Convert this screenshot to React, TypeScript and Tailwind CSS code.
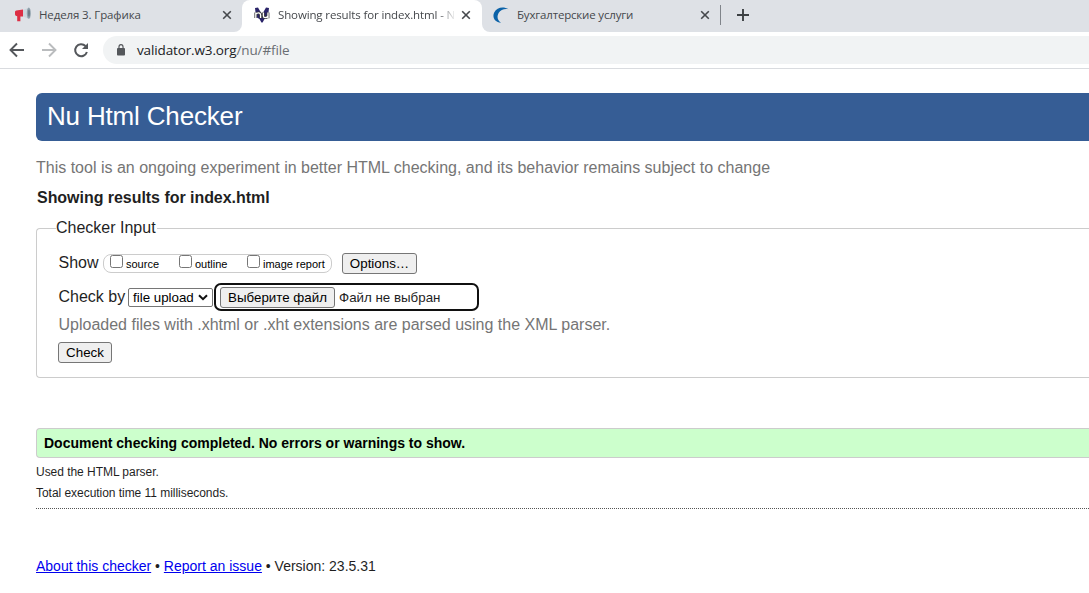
import React from "react";

function Close() {
  return (
    <svg width="10" height="10" viewBox="0 0 10 10" className="shrink-0">
      <path d="M1.2 1.2l7.6 7.6M8.8 1.2L1.2 8.8" stroke="#45484c" strokeWidth="1.6" />
    </svg>
  );
}

function Megaphone() {
  return (
    <svg width="18" height="16" viewBox="0 0 18 16" className="shrink-0">
      <path d="M1 5Q1 3.6 2.3 3.5L9 2.6V9.6L6.4 9.4V14.2H3.2V9.3Q1.2 9.2 1 7.6Z" fill="#dd2e44" />
      <path d="M9 3L14 1V11.5L9 9.5Z" fill="#ccd6dd" />
      <ellipse cx="14.8" cy="6.2" rx="2" ry="5.6" fill="#8fa1ac" />
      <ellipse cx="15" cy="6.2" rx="0.8" ry="3.6" fill="#66757f" />
    </svg>
  );
}

function NuLogo() {
  return (
    <svg width="16" height="16" viewBox="0 0 16 16" className="shrink-0">
      <path d="M1 1L4 0.5L8 7.5L12 0.5L15 1L14 10L10.5 12L8.6 15.6H7.4L5.5 12L2 10Z" fill="#2a2469" />
      <path d="M1.8 11V5.6M1.8 7.2Q3 5.8 4.8 5.9Q6.6 6.1 6.6 8V11M9.4 5.4V9Q9.4 10.6 11.2 10.6Q14 10.5 14 8.5M14 5.4V11.2" fill="none" stroke="#3a3a3a" strokeWidth="2.8" />
      <path d="M1.8 11V5.6M1.8 7.2Q3 5.8 4.8 5.9Q6.6 6.1 6.6 8V11M9.4 5.4V9Q9.4 10.6 11.2 10.6Q14 10.5 14 8.5M14 5.4V11.2" fill="none" stroke="#fff" strokeWidth="1.3" />
    </svg>
  );
}

function Crescent() {
  return (
    <svg width="16" height="16" viewBox="0 0 16 16" className="shrink-0">
      <path d="M15.6 2.2C10 -0.8 4 0.4 1.2 5.5C-1 10 1.6 15.4 8 15.8C4.4 13.5 3.6 9.5 5.6 6C7.6 2.6 11.5 1.4 15.6 2.2Z" fill="#0b62a8" />
    </svg>
  );
}

const buttonBase = "box-border shrink-0 rounded-[3px] border border-[#767676] bg-[#efefef] text-[13.333px] leading-[19px] text-black";

function Check({ label, box }: { label: string; box: string }) {
  return (
    <label className={"flex shrink-0 items-start " + box}>
      <span className="mr-[3px] h-[13px] w-[13px] shrink-0 rounded-[2.5px] border border-[#767676] bg-white" />
      <span className="mt-[2px] whitespace-nowrap text-[11px] leading-[14px] text-black">{label}</span>
    </label>
  );
}

export default function App() {
  return (
    <div className="h-[593px] w-[1089px] overflow-hidden bg-white font-['Liberation_Sans',Arial,sans-serif] text-[#1f1f1f]">
      <header className="font-['Open_Sans','Noto_Sans',sans-serif]">
        <div className="flex h-8 bg-white text-[11.5px] text-[#45484c]">
          <div className="flex h-8 w-[242px] items-center rounded-br-[8px] bg-[#dee1e6] pr-[10px] pb-[2px] pl-[14px]">
            <Megaphone />
            <span className="ml-[7px] flex-1 whitespace-nowrap tracking-[-0.12px]">Неделя 3. Графика</span>
            <Close />
          </div>
          <div className="flex h-8 w-[240px] bg-[#dee1e6]">
            <div className="flex h-8 w-full items-center rounded-t-[8px] bg-white pr-[11px] pb-[2px] pl-[12px]">
              <NuLogo />
              <span className="ml-2 w-[176px] overflow-hidden whitespace-nowrap tracking-[-0.13px] [mask-image:linear-gradient(to_right,#000_160px,transparent_178px)]">Showing results for index.html - N</span>
              <span className="flex-1" />
              <Close />
            </div>
          </div>
          <div className="flex h-8 flex-1 items-center rounded-bl-[8px] bg-[#dee1e6] pb-[2px] pl-[11px]">
            <Crescent />
            <span className="ml-2 w-[183px] whitespace-nowrap tracking-[-0.18px]">Бухгалтерские услуги</span>
            <Close />
            <span className="ml-[10px] h-5 w-px bg-[#80848a]" />
            <svg width="12" height="12" viewBox="0 0 12 12" className="ml-4">
              <path d="M6 0v12M0 6h12" stroke="#3c4043" strokeWidth="1.9" />
            </svg>
          </div>
        </div>
        <div className="flex h-[37px] items-center border-b border-[#d9dbdf] bg-white pl-[9px]">
          <svg width="16" height="16" viewBox="0 0 16 16" fill="none" stroke="#54575b" strokeWidth="1.9">
            <path d="M15 8H2M8 1.5L1.5 8L8 14.5" />
          </svg>
          <svg width="16" height="16" viewBox="0 0 16 16" fill="none" stroke="#babcbe" strokeWidth="1.9" className="ml-4">
            <path d="M1 8H14M8 1.5L14.5 8L8 14.5" />
          </svg>
          <svg width="16" height="16" viewBox="0 0 16 16" className="ml-4">
            <path d="M13.9 10A6 6 0 1 1 12.5 4" fill="none" stroke="#54575b" strokeWidth="2" />
            <path d="M15 1V7H9Z" fill="#54575b" />
          </svg>
          <div className="ml-[14px] flex h-7 flex-1 items-center rounded-l-full bg-[#f1f3f4] pl-[14px] text-[13.5px]">
            <svg width="8" height="12" viewBox="0 0 9 12" preserveAspectRatio="none">
              <rect x="0" y="4" width="9" height="7.6" rx="1" fill="#54575b" />
              <path d="M2.2 5V3a2.3 2.3 0 0 1 4.6 0v2" fill="none" stroke="#54575b" strokeWidth="1.3" />
            </svg>
            <span className="ml-[12px] whitespace-nowrap tracking-[-0.13px] text-[#202124]">validator.w3.org<span className="text-[#6a6e73]">/nu/#file</span></span>
          </div>
        </div>
      </header>

      <main className="pt-6 pl-9">
        <h1 className="h-12 rounded-l-[6px] bg-[#365d95] pl-[11px] text-[26px] leading-[46px] tracking-[-0.17px] text-white">Nu Html Checker</h1>
        <p className="mt-[17px] h-5 text-[16px] leading-5 whitespace-nowrap text-[#757575]">This tool is an ongoing experiment in better HTML checking, and its behavior remains subject to change</p>
        <h2 className="mt-[10px] h-5 pl-px text-[16px] leading-5 font-bold tracking-[-0.04px]">Showing results for index.html</h2>

        <fieldset className="mt-[10px] h-[160px] rounded-l-[4px] border border-r-0 border-[#ccc] pl-[21px]">
          <legend className="-ml-[2px] h-5 pr-px text-[16px] leading-5">Checker Input</legend>
          <div className="mt-[14px] flex h-[22px] items-center">
            <span className="w-[45px] pl-[0.5px] text-[16px] leading-5">Show</span>
            <div className="flex h-[19px] w-[229px] items-start rounded-[8px] border border-[#ccc] pl-[6px]">
              <Check label="source" box="w-[69px]" />
              <Check label="outline" box="w-[68px]" />
              <Check label="image report" box="w-[80px]" />
            </div>
            <button className={buttonBase + " ml-[10px] h-[21px] w-[75px]"}>Options…</button>
          </div>
          <div className="mt-[9px] flex h-[28px] items-center">
            <span className="w-[70px] pl-[0.5px] whitespace-nowrap text-[16px] leading-5">Check by</span>
            <div className="flex h-[19px] w-[85px] items-center justify-between rounded-[2px] border border-[#767676] bg-white pr-1 pl-1 text-[13.333px] leading-[17px] text-black">
              file upload
              <svg width="10" height="7" viewBox="0 0 10 7">
                <path d="M1 1.2L5 5.2L9 1.2" fill="none" stroke="#111" strokeWidth="2" />
              </svg>
            </div>
            <div className="ml-px flex h-[28px] w-[265px] items-center rounded-[7px] border-2 border-[#101010] pl-[4px]">
              <button className={buttonBase + " h-[21px] w-[115px] whitespace-nowrap"}>Выберите файл</button>
              <span className="ml-1 pt-px text-[13.333px] leading-[18px] whitespace-nowrap">Файл не выбран</span>
            </div>
          </div>
          <p className="mt-[4px] h-5 pl-[0.5px] text-[16px] leading-5 whitespace-nowrap text-[#757575]">Uploaded files with .xhtml or .xht extensions are parsed using the XML parser.</p>
          <button className={buttonBase + " mt-[7px] block h-[21px] w-[54px]"}>Check</button>
        </fieldset>

        <p className="mt-[50px] h-[30px] rounded-l-[4px] border border-r-0 border-[#ccc] bg-[#ccffcc] pl-[7px] text-[14px] leading-[28px] font-bold text-black">Document checking completed. No errors or warnings to show.</p>
        <p className="mt-[6px] h-4 text-[12px] leading-4 tracking-[-0.04px]">Used the HTML parser.</p>
        <p className="mt-[5px] h-4 text-[12px] leading-4 tracking-[-0.04px]">Total execution time 11 milliseconds.</p>
        <div className="mt-[7px] border-t border-dotted border-[#555]" />
        <footer className="mt-[48px] h-[18px] text-[14px] leading-[18px] whitespace-nowrap">
          <a className="text-[#0000ee] underline">About this checker</a> • <a className="text-[#0000ee] underline">Report an issue</a> • Version: 23.5.31
        </footer>
      </main>
    </div>
  );
}
